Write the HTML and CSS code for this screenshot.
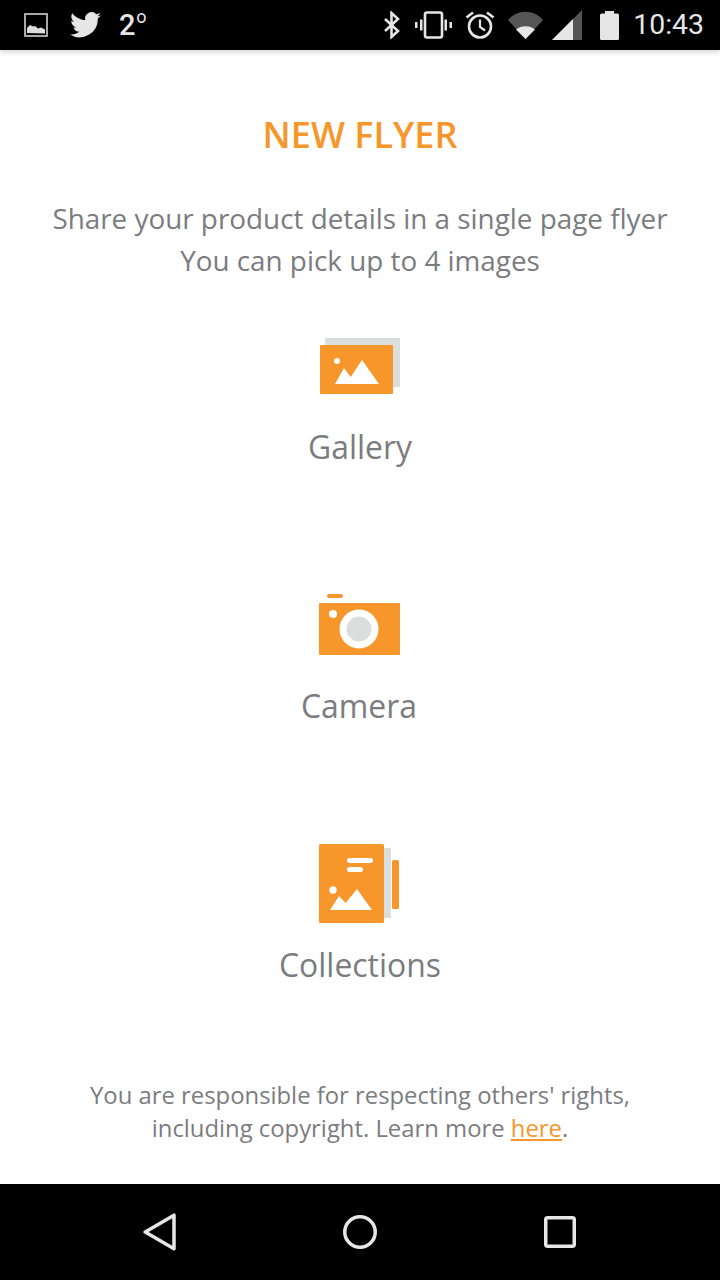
FILE: index.html
```html
<!DOCTYPE html>
<html lang="en">
<head>
<meta charset="utf-8">
<title>New Flyer</title>
<link rel="stylesheet" href="styles.css">
</head>
<body>
<div class="phone">
  <header class="status">
    <div class="status-left">
      <svg class="i-pic" width="24" height="24" viewBox="0 0 24 24"><rect x="1" y="1" width="22" height="22" fill="none" stroke="#bbb" stroke-width="1.800"/><path d="M3 20v-5l3-3 3 1.500 2-.5 3 2.500 3-1 4 2v4z" fill="#ddd"/></svg>
      <svg class="i-tw" width="31" height="26" viewBox="0 0 24 20"><path d="M24 2.400c-.9.400-1.800.7-2.800.8 1-.6 1.800-1.600 2.200-2.700-1 .6-2 1-3.100 1.200A4.900 4.900 0 0 0 11.900 6.200C7.800 6 4.200 4 1.700.9c-1.300 2.200-.7 5.100 1.500 6.600-.8 0-1.600-.2-2.200-.6 0 2.400 1.700 4.400 3.900 4.900-.7.2-1.500.2-2.200.1.600 2 2.400 3.400 4.600 3.400A9.900 9.900 0 0 1 0 17.300 14 14 0 0 0 21.500 4.900c1-.7 1.800-1.500 2.500-2.500z" fill="#e6e6e6"/></svg>
      <span class="temp">2<sup class="deg">o</sup></span>
    </div>
    <div class="status-right">
      <svg class="i-bt" width="20" height="28" viewBox="0 0 20 28"><path d="M3 8l13 12-6.500 6V2L16 8 3 20" fill="none" stroke="#e6e6e6" stroke-width="2.600"/></svg>
      <svg class="i-vib" width="37" height="28" viewBox="0 0 37 28"><rect x="10" y="1.500" width="17" height="25" rx="2" fill="none" stroke="#e6e6e6" stroke-width="2.600"/><path d="M5 8.500h2.500v11H5zM0 11h2.500v6H0zM29.500 8.500H32v11h-2.500zM34.500 11H37v6h-2.500z" fill="#e6e6e6"/></svg>
      <svg class="i-alarm" width="30" height="30" viewBox="0 0 30 30"><circle cx="15" cy="16.500" r="11" fill="none" stroke="#e6e6e6" stroke-width="2.600"/><path d="M15 9.500V17l5 3.500" fill="none" stroke="#e6e6e6" stroke-width="2.200"/><path d="M1.500 7.500L8 2.500M28.500 7.500L22 2.500" stroke="#e6e6e6" stroke-width="2.600"/></svg>
      <svg class="i-wifi" width="35" height="28" viewBox="0 0 35 28"><path d="M0 9C9 -2 26 -2 35 9L17.500 28z" fill="#555"/><path d="M8 18.500c5-4.500 14-4.500 19 0L17.500 28z" fill="#e6e6e6"/></svg>
      <svg class="i-sig" width="30" height="30" viewBox="0 0 30 30"><path d="M30 0v30H0z" fill="#555"/><path d="M21 9v21H0z" fill="#e6e6e6"/></svg>
      <svg class="i-bat" width="19" height="29" viewBox="0 0 19 29"><path d="M5 0h9v2.500h3.500a1.500 1.500 0 0 1 1.500 1.500v23.500a1.500 1.500 0 0 1-1.500 1.500h-16A1.500 1.500 0 0 1 0 27.500V4a1.500 1.500 0 0 1 1.500-1.500H5z" fill="#e6e6e6"/></svg>
      <span class="time">10:43</span>
    </div>
  </header>
  <main class="content">
    <h1 class="title">NEW FLYER</h1>
    <p class="desc">Share your product details in a single page flyer<br>You can pick up to 4 images</p>
    <section class="options">
      <div class="option option-gallery">
        <svg class="opt-icon" width="80" height="56" viewBox="0 0 80 56"><rect x="5" y="0" width="75" height="49" fill="#dcdddd"/><rect y="7" width="73" height="49" rx="1" fill="#f7962b"/><circle cx="17" cy="23" r="3" fill="#fff"/><path d="M15 46l9-16 6.700 9L42 22l17 24z" fill="#fff"/></svg>
        <span class="opt-label">Gallery</span>
      </div>
      <div class="option option-camera">
        <svg class="opt-icon" width="81" height="62" viewBox="0 0 81 62"><rect x="8" y="0" width="16" height="4" rx="2" fill="#f7962b"/><rect y="9" width="81" height="52" rx="1" fill="#f7962b"/><circle cx="14" cy="20" r="4" fill="#fff"/><circle cx="40" cy="35" r="19.500" fill="#fff"/><circle cx="40" cy="35" r="12.500" fill="#dcdddd"/></svg>
        <span class="opt-label">Camera</span>
      </div>
      <div class="option option-collections">
        <svg class="opt-icon" width="82" height="80" viewBox="0 0 82 80"><rect x="60" y="4" width="12" height="70" rx="1" fill="#dcdddd"/><rect x="73" y="16" width="7" height="49" rx="1.500" fill="#f7962b"/><rect y="0" width="65" height="79" rx="1.500" fill="#f7962b"/><rect x="28" y="14" width="26" height="5" rx="2.500" fill="#fff"/><rect x="28" y="23" width="16" height="5" rx="2.500" fill="#fff"/><circle cx="14" cy="46" r="3.700" fill="#fff"/><path d="M11 66l9-14 6.700 7L38 45l15 21z" fill="#fff"/></svg>
        <span class="opt-label">Collections</span>
      </div>
    </section>
    <p class="legal">You are responsible for respecting others' rights,<br>including copyright. Learn more <a class="link" href="#">here</a>.</p>
  </main>
  <nav class="navbar">
    <svg width="33" height="38" viewBox="0 0 33 38"><path d="M2.200 19L31 2.200v33.600z" fill="none" stroke="#e6e6e6" stroke-width="3.500" stroke-linejoin="round"/></svg>
    <svg width="34" height="34" viewBox="0 0 34 34"><circle cx="17" cy="17" r="15.250" fill="none" stroke="#e6e6e6" stroke-width="3.500"/></svg>
    <svg width="32" height="32" viewBox="0 0 32 32"><rect x="1.750" y="1.750" width="28.500" height="28.500" rx="2" fill="none" stroke="#e6e6e6" stroke-width="3.500"/></svg>
  </nav>
</div>
</body>
</html>
```

FILE: styles.css
```css
html, body { margin: 0; padding: 0; }
body { background: #fff; font-family: "Open Sans", "Liberation Sans", sans-serif; color: #7b7c7f; }
.phone { width: 720px; height: 1280px; display: flex; flex-direction: column; overflow: hidden; }
.status { height: 50px; flex: none; background: #000; display: flex; justify-content: space-between; align-items: center; padding: 0 16px 0 24px; box-shadow: 0 2px 5px rgba(0,0,0,.18); position: relative; }
.status-left, .status-right { display: flex; align-items: center; }
.i-tw { margin-left: 22px; }
.temp { margin-left: 18px; font: 500 29px/1 Roboto, sans-serif; color: #e6e6e6; position: relative; padding-right: 12px; }
.deg { position: absolute; right: 1px; top: -3px; font-size: 18px; font-weight: 400; line-height: 1; }
.i-vib { margin-left: 13px; }
.i-alarm { margin-left: 13px; }
.i-wifi { margin-left: 13px; }
.i-sig { margin-left: 9px; }
.i-bat { margin-left: 18px; }
.time { margin-left: 14px; font: 400 28.4px/1 Roboto, sans-serif; color: #e6e6e6; }
.content { flex: 1; display: flex; flex-direction: column; align-items: center; text-align: center; min-height: 0; }
.title { margin: 64px 0 0; font-size: 36px; line-height: 42px; font-weight: 600; color: #f7962b; }
.desc { margin: 41px 0 0; font-size: 27.85px; line-height: 42px; }
.options { display: flex; flex-direction: column; align-items: center; margin-top: 57px; }
.option { display: flex; flex-direction: column; align-items: center; }
.opt-icon { display: block; }
.opt-label { font-size: 31.9px; line-height: 42px; }
.option-gallery .opt-label { margin-top: 32px; }
.option-camera { margin-top: 126px; }
.option-camera .opt-label { margin-top: 29px; padding-right: 2px; }
.option-collections { margin-top: 117px; }
.option-collections .opt-label { margin-top: 20px; }
.legal { margin: auto 0 39px; font-size: 23.85px; line-height: 33px; }
.link { color: #f7962b; }
.navbar { height: 96px; flex: none; background: #000; display: flex; align-items: center; justify-content: space-between; padding: 0 144px 0 143px; }
```
